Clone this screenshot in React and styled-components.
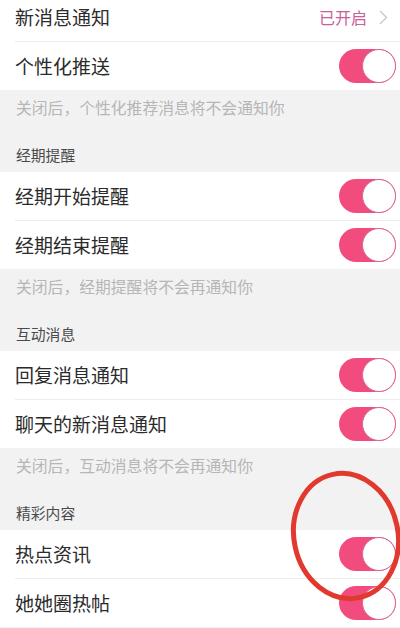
import React from "react";
import styled, { createGlobalStyle } from "styled-components";

const GlobalStyle = createGlobalStyle`
  html, body {
    margin: 0;
    padding: 0;
    background: #f2f2f2;
    font-family: "Noto Sans CJK SC", "Noto Sans", sans-serif;
  }
`;

const Page = styled.div`
  position: relative;
  width: 400px;
  height: 628px;
  overflow: hidden;
  background: #f2f2f2;
`;

const Scroller = styled.div`
  margin-top: -7px;
`;

const Group = styled.div`
  background: #fff;
`;

const Row = styled.div`
  display: flex;
  align-items: center;
  height: 48px;
  padding: 0 4px 0 15px;
  position: relative;
  & + & {
    border-top: 1px solid #ececec;
    margin-left: 15px;
    padding-left: 0;
  }
`;

const Title = styled.span`
  flex: 1;
  font-size: 19px;
  color: #2b2b2b;
  line-height: 24px;
`;

const Status = styled.span`
  font-size: 16px;
  color: #c8609a;
  margin-right: 12px;
`;

const Chevron = styled.svg`
  width: 9px;
  height: 15px;
  margin-right: 8px;
`;

const Track = styled.div`
  width: 57px;
  height: 34px;
  border-radius: 17px;
  background: #f24b7e;
  display: flex;
  justify-content: flex-end;
  box-sizing: border-box;
`;

const Knob = styled.div`
  width: 34px;
  height: 34px;
  border-radius: 50%;
  background: #fff;
  border: 1.5px solid #d8689a;
  box-sizing: border-box;
`;

const Note = styled.div`
  padding: 8px 15px 7px 16px;
  display: flex;
  flex-direction: column;
  gap: 27px;
`;

const Hint = styled.div`
  font-size: 15.8px;
  line-height: 20px;
  color: #b6b6b6;
`;

const Heading = styled.div`
  font-size: 14.8px;
  line-height: 20px;
  color: #4a4a4a;
`;

const Circle = styled.svg`
  position: absolute;
  left: 280px;
  top: 462px;
  width: 130px;
  height: 150px;
  pointer-events: none;
`;

const Toggle = () => (
  <Track>
    <Knob />
  </Track>
);

const sections = [
  {
    hint: "经期提醒",
    rows: ["经期开始提醒", "经期结束提醒"],
    note: "关闭后，经期提醒将不会再通知你",
  },
  {
    hint: "互动消息",
    rows: ["回复消息通知", "聊天的新消息通知"],
    note: "关闭后，互动消息将不会再通知你",
  },
  {
    hint: "精彩内容",
    rows: ["热点资讯", "她她圈热帖"],
    note: null,
  },
];

export default function App() {
  return (
    <Page>
      <GlobalStyle />
      <Scroller>
        <Group>
          <Row>
            <Title>新消息通知</Title>
            <Status>已开启</Status>
            <Chevron viewBox="0 0 9 15">
              <path d="M1 1l6.5 6.5L1 14" fill="none" stroke="#c9c9c9" strokeWidth="1.4" />
            </Chevron>
          </Row>
          <Row>
            <Title>个性化推送</Title>
            <Toggle />
          </Row>
        </Group>
        <Note>
          <Hint>关闭后，个性化推荐消息将不会通知你</Hint>
          <Heading>{sections[0].hint}</Heading>
        </Note>
        {sections.map((s, i) => (
          <React.Fragment key={s.hint}>
            <Group>
              {s.rows.map((r) => (
                <Row key={r}>
                  <Title>{r}</Title>
                  <Toggle />
                </Row>
              ))}
            </Group>
            {s.note && (
              <Note>
                <Hint>{s.note}</Hint>
                <Heading>{sections[i + 1].hint}</Heading>
              </Note>
            )}
          </React.Fragment>
        ))}
      </Scroller>
      <Circle viewBox="0 0 130 150">
        <ellipse
          cx="66"
          cy="74"
          rx="52"
          ry="63"
          transform="rotate(-12 66 74)"
          fill="none"
          stroke="#e2392f"
          strokeWidth="5"
        />
      </Circle>
    </Page>
  );
}
